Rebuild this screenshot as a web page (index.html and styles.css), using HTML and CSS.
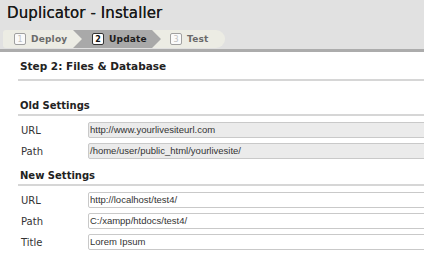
FILE: index.html
```html
<!DOCTYPE html>
<html>
<head>
<meta charset="utf-8">
<link rel="stylesheet" href="styles.css">
</head>
<body>
<div class="page">
  <header class="hdr">
    <h1 class="title">Duplicator - Installer</h1>
    <div class="steps">
      <div class="step step-first"><span class="num">1</span><span class="lbl">Deploy</span></div>
      <div class="step step-mid active"><span class="num">2</span><span class="lbl">Update</span></div>
      <div class="step step-last"><span class="num">3</span><span class="lbl">Test</span></div>
    </div>
  </header>
  <main class="content">
    <h2 class="step-title">Step 2: Files &amp; Database</h2>

    <h3 class="sec">Old Settings</h3>
    <div class="rows">
      <div class="label">URL</div>
      <div class="field ro">http://www.yourlivesiteurl.com</div>
      <div class="label">Path</div>
      <div class="field ro">/home/user/public_html/yourlivesite/</div>
    </div>

    <h3 class="sec sec-new">New Settings</h3>
    <div class="rows">
      <div class="label">URL</div>
      <div class="field">http://localhost/test4/</div>
      <div class="label">Path</div>
      <div class="field">C:/xampp/htdocs/test4/</div>
      <div class="label">Title</div>
      <div class="field">Lorem Ipsum</div>
    </div>
  </main>
</div>
</body>
</html>
```

FILE: styles.css
```css
* { box-sizing: border-box; }
html, body { margin: 0; padding: 0; background: #fff; }
body { width: 424px; height: 261px; overflow: hidden; font-family: "DejaVu Sans", Verdana, sans-serif; color: #222; }

.hdr {
  background: #e1e1e1;
  height: 52px;
  border-bottom: 3px solid #acacac;
  padding: 4px 0 0 7px;
  display: flex;
  flex-direction: column;
}
.title {
  margin: 0;
  font-size: 15px;
  font-weight: normal;
  line-height: 18px;
  color: #1a1a1a;
  letter-spacing: 0.1px;
  text-shadow: 0 0 0.4px #1a1a1a;
}
.steps {
  display: flex;
  margin: 8px 0 0 -4px;
  height: 18px;
}
.step {
  display: flex;
  align-items: center;
  height: 18px;
  background: #ecece4;
  font-size: 9px;
  font-weight: bold;
  color: #6a6a6a;
}
.step-first {
  width: 80px;
  padding-left: 11px;
  border-radius: 3px 0 0 3px;
  clip-path: polygon(0 0, calc(100% - 9px) 0, 100% 50%, calc(100% - 9px) 100%, 0 100%);
}
.step-mid {
  width: 89px;
  margin-left: -10px;
  padding-left: 19px;
  clip-path: polygon(0 0, calc(100% - 9px) 0, 100% 50%, calc(100% - 9px) 100%, 0 100%, 9px 50%);
}
.step-last {
  width: 73px;
  margin-left: -10px;
  padding-left: 18px;
  border-radius: 0 9px 9px 0;
  clip-path: polygon(0 0, 100% 0, 100% 100%, 0 100%, 9px 50%);
}
.step.active { background: #a9a9a9; color: #1c1c1c; }
.num {
  display: inline-flex;
  align-items: center;
  justify-content: center;
  width: 12px;
  height: 12px;
  border: 1px solid #a0a0a0;
  border-radius: 2px;
  background: #fafafa;
  color: #c0c0c0;
  font-size: 8px;
  font-weight: normal;
  margin-right: 5px;
}
.active .num { border-color: #333; color: #111; font-weight: bold; background: #fff; }
.lbl { letter-spacing: 0.2px; }

.content { padding: 0 0 0 18px; }
.step-title {
  margin: 7px 0 0 0;
  padding: 0 0 6px 2px;
  font-size: 10.5px;
  line-height: 14px;
  font-weight: bold;
  color: #222;
  border-bottom: 2px solid #d6d6d6;
}
.sec {
  margin: 18px 0 0 0;
  padding: 0 0 1px 2px;
  font-size: 10px;
  line-height: 14px;
  font-weight: bold;
  color: #222;
  border-bottom: 2px solid #d6d6d6;
}
.sec-new { margin-top: 10px; }
.rows {
  display: grid;
  grid-template-columns: 70px 1fr;
  row-gap: 5px;
  margin: 6px -6px 0 0;
  align-items: center;
}
.label {
  padding-left: 3px;
  font-size: 10px;
  color: #333;
}
.field {
  height: 16px;
  border: 1px solid #c9c9c9;
  border-radius: 2px;
  background: #fff;
  font-family: "Liberation Sans", Arial, sans-serif;
  font-size: 9.5px;
  line-height: 14px;
  padding-left: 1px;
  color: #333;
  white-space: nowrap;
  overflow: hidden;
}
.field.ro { background: #ebebeb; }
```
